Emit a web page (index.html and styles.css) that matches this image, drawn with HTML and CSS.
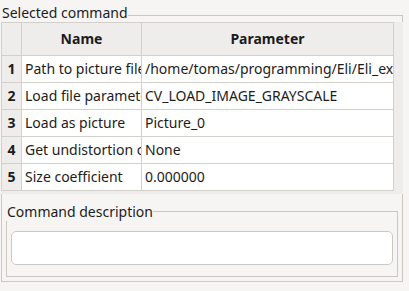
FILE: index.html
```html
<!DOCTYPE html>
<html lang="en">
<head>
    <meta charset="UTF-8">
    <meta name="viewport" content="width=device-width, initial-scale=1.0">
    <title>Selected command</title>
    <link rel="stylesheet" href="styles.css">
</head>
<body>
    <section class="group outer">
        <div class="group-head">
            <span class="group-title">Selected command</span>
            <span class="rule"></span>
        </div>
        <div class="table-view">
            <div class="grid">
                <div class="cell corner"></div>
                <div class="cell head">Name</div>
                <div class="cell head">Parameter</div>

                <div class="cell num">1</div>
                <div class="cell">Path to picture file</div>
                <div class="cell">/home/tomas/programming/Eli/Eli_examples/pictures</div>

                <div class="cell num">2</div>
                <div class="cell">Load file parameters</div>
                <div class="cell">CV_LOAD_IMAGE_GRAYSCALE</div>

                <div class="cell num">3</div>
                <div class="cell">Load as picture</div>
                <div class="cell">Picture_0</div>

                <div class="cell num">4</div>
                <div class="cell">Get undistortion coefficients</div>
                <div class="cell">None</div>

                <div class="cell num">5</div>
                <div class="cell">Size coefficient</div>
                <div class="cell">0.000000</div>
            </div>
        </div>
        <div class="group-body">
            <section class="group inner">
                <div class="group-head">
                    <span class="group-title">Command description</span>
                    <span class="rule"></span>
                </div>
                <div class="group-body">
                    <input type="text" class="desc-field">
                </div>
            </section>
        </div>
    </section>
</body>
</html>
```
FILE: styles.css
```css
body {
    margin: 0;
    padding: 4px 0 0 1px;
    width: 402px;
    font-family: "Noto Sans", sans-serif;
    font-size: 14px;
    color: #1c1c1c;
    background-color: #f6f5f4;
}

.group-head {
    display: flex;
    height: 18px;
    line-height: 18px;
}

.group-title {
    margin-left: 1px;
    white-space: nowrap;
}

.rule {
    flex: 1;
    margin-top: 11px;
    border-top: 1px solid #cdc7c2;
    border-right: 1px solid #cdc7c2;
}

.group-body {
    border: 1px solid #cdc7c2;
    border-top: none;
    padding: 9px 4px 4px 4px;
}

.inner .rule {
    margin-top: 8px;
}

.inner .group-body {
    padding: 10px 4px 11px 4px;
}

.table-view {
    height: 172px;
    background-color: #efedec;
    overflow: hidden;
}

.grid {
    display: grid;
    grid-template-columns: 20px 120px 252px;
    grid-template-rows: 33px;
    grid-auto-rows: 27px;
    width: 393px;
    border-left: 1px solid #d3cfcb;
    border-top: 1px solid #d3cfcb;
    box-sizing: border-box;
}

.cell {
    border-right: 1px solid #d3cfcb;
    border-bottom: 1px solid #d3cfcb;
    background-color: #ffffff;
    padding: 0 3px;
    line-height: 26px;
    white-space: nowrap;
    overflow: hidden;
}

.corner,
.head {
    background-color: #efedec;
}

.head {
    line-height: 32px;
    text-align: center;
    font-weight: bold;
}

.num {
    background-color: #efedec;
    font-weight: bold;
    text-align: center;
    padding: 0;
}

.grid .corner {
    padding: 0;
}

.desc-field {
    display: block;
    width: 100%;
    height: 34px;
    box-sizing: border-box;
    border: 1px solid #cdc7c2;
    border-radius: 5px;
    background-color: #ffffff;
    font: inherit;
}
```
